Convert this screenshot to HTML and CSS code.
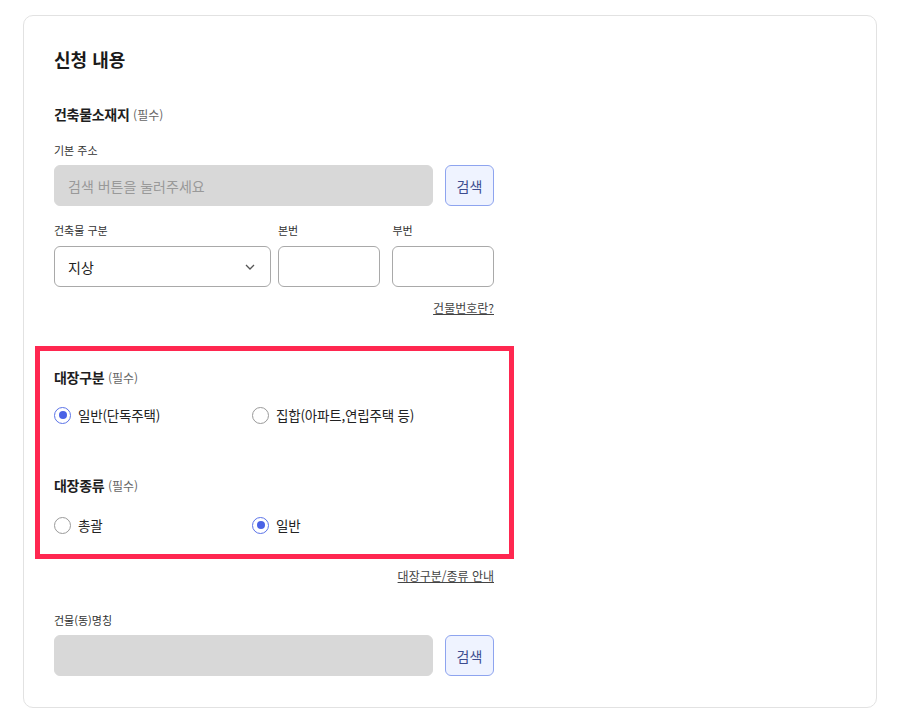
FILE: index.html
```html
<!DOCTYPE html>
<html lang="ko">
<head>
<meta charset="utf-8">
<link rel="stylesheet" href="styles.css">
</head>
<body>
<div class="card">
  <h2 class="title">신청 내용</h2>
  <div class="form">
    <div class="sec-label">건축물소재지 <span class="req">(필수)</span></div>
    <div class="field-label first">기본 주소</div>
    <div class="input-row">
      <div class="input disabled placeholder">검색 버튼을 눌러주세요</div>
      <button class="btn">검색</button>
    </div>
    <div class="tri-row">
      <div class="col col-select">
        <div class="field-label">건축물 구분</div>
        <div class="input select">
          <span>지상</span>
          <svg class="chev" width="10" height="6" viewBox="0 0 10 6"><path d="M1 1l4 4 4-4" fill="none" stroke="#555" stroke-width="1.3"/></svg>
        </div>
      </div>
      <div class="col col-num">
        <div class="field-label">본번</div>
        <div class="input"></div>
      </div>
      <div class="col col-num2">
        <div class="field-label">부번</div>
        <div class="input"></div>
      </div>
    </div>
    <div class="link-row"><a class="link">건물번호란?</a></div>

    <div class="highlight">
      <div class="sec-label">대장구분 <span class="req">(필수)</span></div>
      <div class="radios">
        <label class="radio"><span class="dot checked"></span>일반(단독주택)</label>
        <label class="radio"><span class="dot"></span>집합(아파트,연립주택 등)</label>
      </div>
      <div class="sec-label second">대장종류 <span class="req">(필수)</span></div>
      <div class="radios second">
        <label class="radio"><span class="dot"></span>총괄</label>
        <label class="radio"><span class="dot checked"></span>일반</label>
      </div>
    </div>
    <div class="link-row after"><a class="link">대장구분/종류 안내</a></div>

    <div class="field-label bld">건물(동)명칭</div>
    <div class="input-row">
      <div class="input disabled"></div>
      <button class="btn">검색</button>
    </div>
  </div>
</div>
</body>
</html>
```
FILE: styles.css
```css
* { box-sizing: border-box; }
html, body { margin: 0; padding: 0; background: #fff; }
body {
  padding: 15px 23px 17px;
  font-family: "Noto Sans CJK KR", "Noto Sans", sans-serif;
  color: #222;
}
.card {
  border: 1px solid #e2e2e2;
  border-radius: 10px;
  padding: 30px 30px 29px 30px;
  height: 693px;
}
.title {
  margin: 0;
  font-size: 18px;
  line-height: 26px;
  font-weight: 700;
  color: #1a1a1a;
}
.form { width: 440px; }
.sec-label {
  margin-top: 32px;
  font-size: 14px;
  line-height: 20px;
  font-weight: 700;
  color: #1e1e1e;
  letter-spacing: -0.3px;
}
.req { font-size: 12px; font-weight: 400; color: #666; letter-spacing: 0; }
.field-label {
  font-size: 11px;
  line-height: 18px;
  color: #333;
  margin-bottom: 7px;
}
.field-label.first { margin-top: 16px; margin-bottom: 6px; }
.input-row { display: flex; gap: 12px; }
.input {
  height: 41px;
  border: 1px solid #a9a9a9;
  border-radius: 6px;
  background: #fff;
  flex: 1;
}
.input.disabled {
  background: #d8d8d8;
  border-color: #d8d8d8;
}
.placeholder {
  display: flex;
  align-items: center;
  padding-left: 13px;
  font-size: 14px;
  color: #999;
}
.btn {
  width: 49px;
  height: 41px;
  border: 1px solid #8ea4ef;
  border-radius: 6px;
  background: #eff3ff;
  color: #3d4c8f;
  font-family: inherit;
  font-size: 14px;
  padding: 0;
}
.tri-row { display: flex; gap: 7px; margin-top: 15px; }
.tri-row .col { display: flex; flex-direction: column; }
.col-select { width: 218px; }
.col-num { width: 103px; }
.col-num2 { width: 102px; margin-left: 5px; }
.tri-row .input { flex: none; }
.select {
  display: flex;
  align-items: center;
  justify-content: space-between;
  padding: 0 15px 0 13px;
  font-size: 14px;
  color: #222;
}
.chev { margin-top: 1px; }
.link-row { display: flex; justify-content: flex-end; margin-top: 12px; }
.link {
  font-size: 12px;
  line-height: 18px;
  color: #444;
  text-decoration: underline;
}
.highlight {
  margin: 29px -20px 0 -19px;
  border: 5px solid #ff2750;
  padding: 16px 15px 19px 14px;
}
.highlight .sec-label { margin-top: 0; }
.highlight .sec-label.second { margin-top: 50px; }
.radios {
  display: grid;
  grid-template-columns: 198px 1fr;
  margin-top: 17px;
}
.radios.second { margin-top: 19px; }
.radio {
  display: flex;
  align-items: center;
  gap: 7px;
  font-size: 13.5px;
  letter-spacing: -0.2px;
  line-height: 20px;
  color: #222;
}
.dot {
  width: 17px;
  height: 17px;
  border: 1px solid #9a9a9a;
  border-radius: 50%;
  display: flex;
  align-items: center;
  justify-content: center;
  flex: none;
}
.dot.checked { border-color: #5b73e8; }
.dot.checked::after {
  content: "";
  width: 8px;
  height: 8px;
  border-radius: 50%;
  background: #4a62e6;
}
.link-row.after { margin-top: 8px; }
.field-label.bld { margin-top: 26px; margin-bottom: 6px; }
```
